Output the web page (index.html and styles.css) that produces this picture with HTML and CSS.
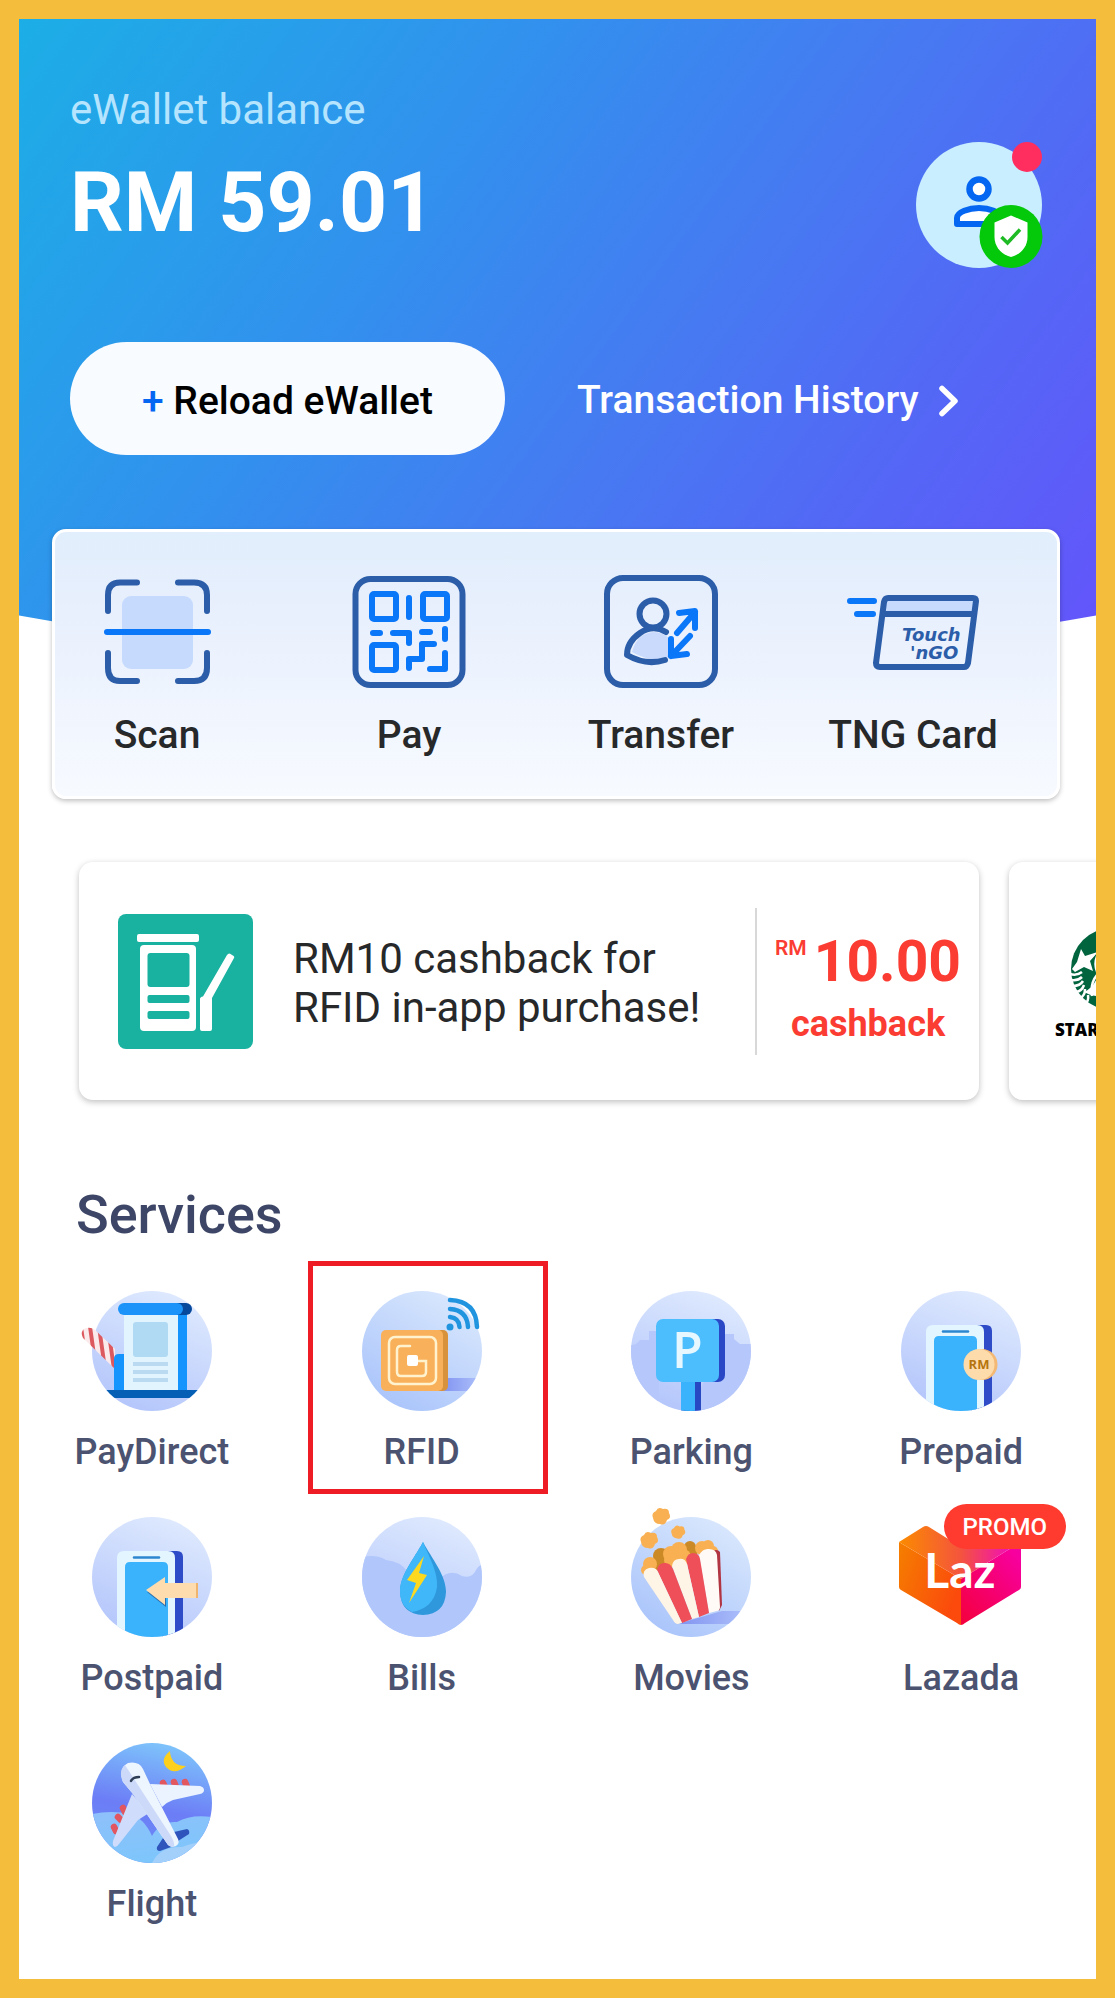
FILE: index.html
```html
<!DOCTYPE html>
<html lang="en">
<head>
    <meta charset="UTF-8">
    <meta name="viewport" content="width=device-width, initial-scale=1.0">
    <title>eWallet</title>
    <link rel="stylesheet" href="styles.css">
</head>
<body>
    <!-- shared gradients and shapes -->
    <svg class="defs" width="0" height="0" aria-hidden="true">
        <defs>
            <linearGradient id="disc" x1="0.7" y1="0" x2="0.3" y2="1">
                <stop offset="0" stop-color="#dfeafe"/>
                <stop offset="1" stop-color="#b3c5fb"/>
            </linearGradient>
            <linearGradient id="discBlue" x1="0.8" y1="0" x2="0.2" y2="1">
                <stop offset="0" stop-color="#dbe9fd"/>
                <stop offset="1" stop-color="#a8c3fb"/>
            </linearGradient>
            <linearGradient id="shade">
                <stop offset="0" stop-color="#8093f0"/>
                <stop offset="1" stop-color="#b0c3fb"/>
            </linearGradient>
            <linearGradient id="sky" x1="0.6" y1="0" x2="0.4" y2="1">
                <stop offset="0" stop-color="#7ec4fb"/>
                <stop offset="0.55" stop-color="#6c7df6"/>
                <stop offset="1" stop-color="#6a8df5"/>
            </linearGradient>
            <linearGradient id="cloud" x1="0" y1="0" x2="0.3" y2="1">
                <stop offset="0" stop-color="#8fc0fb"/>
                <stop offset="1" stop-color="#7cc6fb"/>
            </linearGradient>
            <linearGradient id="lazLeft" x1="0" y1="0" x2="1" y2="0.5">
                <stop offset="0" stop-color="#f57f00"/>
                <stop offset="1" stop-color="#fb4a0c"/>
            </linearGradient>
            <linearGradient id="lazRight" x1="0" y1="1" x2="0.8" y2="0">
                <stop offset="0" stop-color="#f4003c"/>
                <stop offset="1" stop-color="#f700a2"/>
            </linearGradient>
            <linearGradient id="lazTop">
                <stop offset="0" stop-color="#fb8b00"/>
                <stop offset="0.5" stop-color="#f4553c"/>
                <stop offset="1" stop-color="#f000d0"/>
            </linearGradient>
            <clipPath id="round"><circle cx="60" cy="60" r="60"/></clipPath>
            <pattern id="stripes" width="9" height="20" patternUnits="userSpaceOnUse" patternTransform="skewX(8)">
                <rect width="9" height="20" fill="#fbeaec"/>
                <rect width="4" height="20" fill="#dc5a5f"/>
            </pattern>
            <symbol id="phone" viewBox="0 0 120 120">
                <circle cx="60" cy="60" r="60" fill="url(#disc)"/>
                <g clip-path="url(#round)">
                    <path d="M70 34h15q6 0 6 6v80H70z" fill="#2e4bc8"/>
                    <path d="M25 130V41q0-7 7-7h44q7 0 7 7v89z" fill="#e3f5ff"/>
                    <path d="M33 130V50q0-5 5-5h33q5 0 5 5v80z" fill="#3ab2fc"/>
                    <path d="M42 40.500h25" stroke="#2c86cf" stroke-width="2.500" stroke-linecap="round"/>
                </g>
            </symbol>
            <path id="pop" d="M-8 2q-2-5 3-7 2-5 7-2 6-1 6 4 3 5-2 7-2 6-7 4-6 0-7-6z" fill="#f9b052"/>
        </defs>
    </svg>

    <main class="screen">
        <header class="hero">
            <div class="hero-top">
                <div class="balance">
                    <p class="balance-label">eWallet balance</p>
                    <h1 class="balance-amount">RM 59.01</h1>
                </div>
                <a class="avatar" href="#profile" aria-label="Profile">
                    <svg width="127" height="127" viewBox="0 0 127 127">
                        <circle cx="63" cy="63" r="63" fill="#c8eeff"/>
                        <circle cx="63" cy="47" r="9.500" fill="#fff" stroke="#0566f2" stroke-width="6.500"/>
                        <path d="M41 82v-6c0-6 12-10 22-10s22 4 22 10v6z" fill="#fff" stroke="#0566f2" stroke-width="6" stroke-linejoin="round"/>
                        <circle cx="95" cy="94.500" r="31.500" fill="#04c80a"/>
                        <path d="M95 73.500l16.500 7V95c0 10-7 17.500-16.500 20C85.500 112.500 78.500 105 78.500 95V80.500z" fill="#fff"/>
                        <path d="M85.500 95l6 6L104 87.500" fill="none" stroke="#1fbb24" stroke-width="3.500"/>
                        <circle cx="111" cy="15" r="15" fill="#ff2e5f"/>
                    </svg>
                </a>
            </div>
            <div class="hero-actions">
                <button class="reload" type="button"><span class="plus">+</span> Reload eWallet</button>
                <a class="history" href="#history">Transaction History
                    <svg width="20" height="32" viewBox="0 0 20 32"><path d="M3 3.500L16 16 3 28.500" fill="none" stroke="#fff" stroke-width="5.500" stroke-linecap="round" stroke-linejoin="round"/></svg>
                </a>
            </div>
        </header>

        <nav class="quick">
            <a class="quick-item" href="#scan">
                <svg width="114" height="114" viewBox="0 0 114 114" fill="none" stroke-width="6" stroke-linecap="round">
                    <rect x="22" y="21" width="71" height="73" rx="9" fill="#c6dafd"/>
                    <path d="M8 36V20Q8 7.500 20 7.500h17M78 7.500h16q13 0 13 12.500v16M107 78v15q0 13-13 13H78M37 106H20Q8 106 8 93V78" stroke="#2c5da9"/>
                    <path d="M7 57h101" stroke="#0a76f8"/>
                </svg>
                Scan
            </a>
            <a class="quick-item" href="#pay">
                <svg width="114" height="114" viewBox="0 0 114 114" fill="none" stroke="#0a76f8" stroke-width="6" stroke-linecap="round" stroke-linejoin="round">
                    <rect x="3.500" y="4" width="107" height="106" rx="15" stroke="#2c5da9"/>
                    <rect x="20" y="19" width="24" height="25" rx="2"/>
                    <rect x="71" y="19" width="24" height="25" rx="2"/>
                    <rect x="20" y="70" width="24" height="25" rx="2"/>
                    <path d="M57 23v19M21 58h7M41 58h16v10M70 57h8M93 54v10M82 69H70v15H57v9M93 78v16H78"/>
                </svg>
                Pay
            </a>
            <a class="quick-item" href="#transfer">
                <svg width="114" height="114" viewBox="0 0 114 114" fill="none" stroke-width="6" stroke-linecap="round" stroke-linejoin="round">
                    <rect x="3" y="3" width="108" height="107" rx="16" stroke="#2c5da9"/>
                    <path d="M28 77q5-19 22-20 8 0 15 6v20q-18 5-37-6z" fill="#c9dafc"/>
                    <circle cx="49" cy="39" r="13.500" stroke="#2c5da9"/>
                    <path d="M62 57Q49 49 36 58 23 67 23 80q19 11 38 5" stroke="#2c5da9"/>
                    <path d="M73 58L91 37M75 38l16-2v17M86 61L67 81M67 64v17l16-2" stroke="#0a76f8"/>
                </svg>
                Transfer
            </a>
            <a class="quick-item" href="#card">
                <svg width="132" height="114" viewBox="0 0 132 114" fill="none" stroke-width="6" stroke-linecap="round" stroke-linejoin="round">
                    <path d="M38 24h90l-2 15H36z" fill="#c5dafd"/>
                    <path d="M41 23h85q3 0 3 3l-8 62q-1 4-4 4H33q-4 0-4-4l8-61q1-4 4-4zM36 39h90" stroke="#2c5da9"/>
                    <path d="M3 26h24M10 39h16" stroke="#0a76f8"/>
                    <text class="tng-logo" x="55" y="66">Touch</text>
                    <text class="tng-logo" x="63" y="84">'nGO</text>
                </svg>
                TNG Card
            </a>
        </nav>

        <section class="promos">
            <article class="promo">
                <svg width="135" height="135" viewBox="0 0 135 135">
                    <rect width="135" height="135" rx="8" fill="#19b19f"/>
                    <rect x="19" y="20" width="62" height="8" rx="2" fill="#fff"/>
                    <rect x="22" y="31" width="56" height="86" rx="4" fill="#fff"/>
                    <g fill="#19b19f">
                        <rect x="29.500" y="39" width="42" height="34" rx="3"/>
                        <rect x="29.500" y="81" width="42" height="8" rx="2"/>
                        <rect x="29.500" y="97" width="42" height="8" rx="2"/>
                    </g>
                    <path d="M82 85q0-2 3-2.500L109 41q2-3 5 0 3 1 2 3L94 84v31q0 2-2 2h-8q-2 0-2-2z" fill="#fff"/>
                </svg>
                <p class="promo-text">RM10 cashback for<br>RFID in-app purchase!</p>
                <div class="promo-price">
                    <div class="amount"><span class="currency">RM</span>10.00</div>
                    <div class="cashback">cashback</div>
                </div>
            </article>
            <article class="promo">
                <svg width="135" height="135" viewBox="0 0 135 135">
                    <circle cx="64" cy="55" r="41" fill="#00643f"/>
                    <path d="M33 35l4 7 13-4-8 9 3 10-9-4-9 5-3-3 5-7z" fill="#fff"/>
                    <g fill="none" stroke="#fff" stroke-width="2.500">
                        <path d="M22 60q7 2 12-2M23 66q7 1 11-3M25 72q7 0 10-5M28 78q6-1 8-7M32 84q5-2 5-9M37 90q4-3 3-9"/>
                        <path d="M50 40q-5 10 0 20-8 8-6 22"/>
                    </g>
                    <path d="M36 78q9-4 13-14v18q-6 0-13-4z" fill="#fff"/>
                    <text class="starbucks" x="7" y="122">STARBUCKS</text>
                </svg>
            </article>
        </section>

        <section class="services">
            <h2 class="services-title">Services</h2>
            <div class="services-grid">
                <a class="service" href="#paydirect">
                    <svg width="120" height="120" viewBox="0 0 120 120">
                        <circle cx="60" cy="60" r="60" fill="url(#disc)"/>
                        <path d="M-8 38q6-3 11 1l20 19v20L-9 47q-3-6 1-9z" fill="url(#stripes)"/>
                        <rect x="32" y="22" width="54" height="78" fill="#e2f5ff"/>
                        <rect x="86" y="22" width="9" height="78" fill="#1494fc"/>
                        <path d="M22 100V68q0-5 5-5h5v37z" fill="#1494fc"/>
                        <rect x="60" y="12" width="40" height="12" rx="6" fill="#06489b"/>
                        <rect x="26" y="12" width="65" height="12" rx="6" fill="#1b93f8"/>
                        <rect x="41" y="31" width="35" height="35" rx="3" fill="#b0daf4"/>
                        <path d="M41 73h35M41 81h35M41 89h35" stroke="#b9daf0" stroke-width="4"/>
                        <rect y="99" width="120" height="8" fill="#0560b5" clip-path="url(#round)"/>
                    </svg>
                    PayDirect
                </a>
                <a class="service highlighted" href="#rfid">
                    <svg width="120" height="120" viewBox="0 0 120 120" fill="none" stroke-linecap="round">
                        <circle cx="60" cy="60" r="60" fill="url(#discBlue)"/>
                        <rect x="80" y="87" width="40" height="13" fill="url(#shade)" clip-path="url(#round)"/>
                        <rect x="50" y="39" width="36" height="61" rx="5" fill="#d9923c"/>
                        <rect x="19" y="39" width="62" height="61" rx="5" fill="#f8b05a"/>
                        <g stroke="#fff3cf" stroke-width="2.500">
                            <rect x="27" y="46" width="47" height="47" rx="6"/>
                            <path d="M48 55h-9q-4 0-4 4v22q0 4 4 4h21q4 0 4-4V70H54"/>
                        </g>
                        <rect x="45" y="64" width="11" height="11" rx="2" fill="#fff"/>
                        <circle cx="88" cy="36" r="3.500" fill="#2194e0"/>
                        <path d="M88 26q9 1 9.500 10M88 18q17 1 18 18M88 9q26 1 27 27" stroke="#2194e0" stroke-width="4.500"/>
                    </svg>
                    RFID
                </a>
                <a class="service" href="#parking">
                    <svg width="120" height="120" viewBox="0 0 120 120">
                        <circle cx="60" cy="60" r="60" fill="url(#disc)"/>
                        <g clip-path="url(#round)">
                            <path d="M0 54q6 0 9-5h9v-9h10v70H0zM94 43h9v5l6 5h11v67H60z" fill="#b6c7fb"/>
                            <rect x="50" y="85" width="20" height="36" fill="#2748c2"/>
                            <rect x="50" y="85" width="14" height="36" fill="#3ab2fc"/>
                        </g>
                        <rect x="40" y="28" width="54" height="63" rx="7" fill="#2a48c6"/>
                        <rect x="25" y="28" width="63" height="63" rx="7" fill="#4cbefe"/>
                        <text class="parking-letter" x="41" y="77">P</text>
                    </svg>
                    Parking
                </a>
                <a class="service" href="#prepaid">
                    <svg width="120" height="120" viewBox="0 0 120 120">
                        <use href="#phone"/>
                        <circle cx="81" cy="73.500" r="15.500" fill="#f3b873"/>
                        <circle cx="78" cy="73.500" r="15.500" fill="#fddbaa"/>
                        <text class="coin" x="78" y="78">RM</text>
                    </svg>
                    Prepaid
                </a>
                <a class="service" href="#postpaid">
                    <svg width="120" height="120" viewBox="0 0 120 120">
                        <use href="#phone"/>
                        <path d="M55 75l19 15v-8l-1-5z" fill="#2c6fae"/>
                        <path d="M54 73l19-13v6h32v15H73v7z" fill="#ffdcae"/>
                        <path d="M104 66h2v15h-2z" fill="#efb56f"/>
                    </svg>
                    Postpaid
                </a>
                <a class="service" href="#bills">
                    <svg width="120" height="120" viewBox="0 0 120 120">
                        <circle cx="60" cy="60" r="60" fill="url(#disc)"/>
                        <path d="M0 40q15-3 24 3 14 1 22 12 10 6 30 8 12-12 24-4 10 3 14-6 3-5 6-5v72H0z" fill="#b1c7fc" clip-path="url(#round)"/>
                        <path d="M61 25C70 42 84 58 84 75q-1 22-23 23-22-1-23-23c0-17 14-33 23-50z" fill="#2f98dd"/>
                        <path d="M61 25c7 17 15 30 14 45-2 15-12 23-25 25q-12-6-12-21c0-16 14-32 23-49z" fill="#40b7f8"/>
                        <path d="M62 39L45 63l9 3-7 20 18-28-8-2z" fill="#fcd91f"/>
                    </svg>
                    Bills
                </a>
                <a class="service" href="#movies">
                    <svg width="120" height="120" viewBox="0 0 120 120">
                        <circle cx="60" cy="60" r="60" fill="url(#discBlue)"/>
                        <path d="M46 107l45-13h30v13z" fill="url(#shade)" clip-path="url(#round)"/>
                        <use href="#pop" x="30" y="-1"/>
                        <use href="#pop" x="18" y="23"/>
                        <use href="#pop" transform="translate(47 15) scale(0.800)"/>
                        <g fill="#cb8a26">
                            <circle cx="30" cy="39" r="8"/>
                            <circle cx="29" cy="46" r="8"/>
                            <circle cx="59" cy="30" r="6"/>
                            <circle cx="61" cy="34" r="6"/>
                        </g>
                        <g fill="#f9b052">
                            <circle cx="19" cy="47" r="7"/>
                            <circle cx="15" cy="53" r="5"/>
                            <circle cx="40" cy="37" r="8"/>
                            <circle cx="48" cy="33" r="8"/>
                            <circle cx="52" cy="40" r="8"/>
                            <circle cx="40" cy="43" r="7"/>
                            <circle cx="71" cy="31" r="7"/>
                            <circle cx="77" cy="29" r="6"/>
                            <circle cx="82" cy="34" r="5"/>
                        </g>
                        <path d="M80 35q6-4 9 0l2 53-3 6z" fill="#b03441"/>
                        <path d="M68 38q4-7 10-6 7 0 8 6l3 52q0 3-3 4l-8 2z" fill="#fffaf5"/>
                        <path d="M55 42q2-6 7-6 6 0 7 6l9 54-10 4z" fill="#ee4f58"/>
                        <path d="M41 49q1-7 7-7 6-1 8 5l12 53-7 2z" fill="#fff5e6"/>
                        <path d="M26 53q1-7 7-7 6-1 9 6l19 50-10 4z" fill="#ee4f58"/>
                        <path d="M13 60q-2-7 5-9 7-1 9 4l24 51-4 1q-3 0-5-4z" fill="#fff5e6"/>
                    </svg>
                    Movies
                </a>
                <a class="service" href="#lazada">
                    <svg width="120" height="120" viewBox="0 0 120 120">
                        <path d="M-2 25L60 62v46q-2 0-4-2L0 73q-2-1-2-3z" fill="url(#lazLeft)"/>
                        <path d="M120 25L60 62v46q2 0 4-2l54-33q2-1 2-3z" fill="url(#lazRight)"/>
                        <path d="M-2 25L22 10q3-2 6 0l32 20L92 10q3-2 6 0l22 15-60 37z" fill="url(#lazTop)"/>
                        <text class="laz" x="59" y="71">Laz</text>
                    </svg>
                    Lazada
                    <span class="badge">PROMO</span>
                </a>
                <a class="service" href="#flight">
                    <svg width="120" height="120" viewBox="0 0 120 120">
                        <circle cx="60" cy="60" r="60" fill="url(#sky)"/>
                        <g clip-path="url(#round)">
                            <path d="M0 71q20-4 38 0 14 4 22 22 8-15 25-14 14-8 35-5v50H0z" fill="url(#cloud)"/>
                            <path d="M60 120q8-17 30-16 12-5 30-6v22z" fill="#a3cffb"/>
                        </g>
                        <path d="M78 8q-10 8-4 16 8 9 20-1-8 0-12-4-4-5-4-11z" fill="#fcd01c"/>
                        <g stroke="#e2565f" stroke-width="6.500" stroke-linecap="round">
                            <path d="M71 40l2 4M82 39l2 5M93 39l2 5M31 65l2 4M26 74l3 3M22 84l2 4"/>
                        </g>
                        <path d="M71 95l8 2v7l-11 4q-4 0-3-4zM82 89l13-3q3 1 2 5l-11 7z" fill="#2f55bd"/>
                        <path d="M58 41l50 2q4 1 4 4 0 3-4 4l-27 6q-6 2-11 7z" fill="#eaf3ff"/>
                        <path d="M40 51L21 98q-1 5 2 6 2 0 4-3l19-24 11-7z" fill="#cfdcfb"/>
                        <path d="M31 39q-5-14 5-19 11-2 15 6l7 15 28 55q2 5-2 7-5 2-8-1L41 51z" fill="#edf5ff"/>
                        <path d="M31 39q-5-11 2-17l46 71q4 7 3 11-4 0-6-2L41 51z" fill="#cdd9f9"/>
                        <path d="M39 38q2-4 8-4" fill="none" stroke="#2f3f55" stroke-width="2.500" stroke-linecap="round"/>
                    </svg>
                    Flight
                </a>
            </div>
        </section>
    </main>
</body>
</html>
```
FILE: styles.css
```css
* {
    box-sizing: border-box;
}
body {
    margin: 0;
    font-family: Roboto, "Liberation Sans", sans-serif;
    background-color: #fff;
}
h1, h2, p {
    margin: 0;
}
a {
    color: inherit;
    text-decoration: none;
}
svg {
    flex: none;
    overflow: visible;
}
.defs {
    position: absolute;
}
.screen {
    min-height: 100vh;
    border: 19px solid #f5bd3c;
    overflow: hidden;
}

/* balance header */
.hero {
    padding: 67px 53px 207px 51px;
    color: #fff;
    background: linear-gradient(126deg, #1caee6 0%, #338fee 36%, #4779f2 59%, #5269f5 75%, #6454fb 100%);
    clip-path: ellipse(134% 100% at 50% 0);
}
.hero-top {
    display: flex;
    justify-content: space-between;
    align-items: flex-end;
}
.balance {
    display: flex;
    flex-direction: column;
    gap: 20px;
    padding-bottom: 17px;
}
.balance-label {
    font-size: 42px;
    line-height: 48px;
    color: #b5e4ff;
}
.balance-amount {
    font-size: 84px;
    line-height: 98px;
    font-weight: 700;
}
.avatar {
    display: flex;
}
.hero-actions {
    display: flex;
    align-items: center;
    gap: 72px;
    margin-top: 73px;
}
.reload {
    padding: 36px 72px 30px;
    border: none;
    border-radius: 57px;
    background-color: #f8fbff;
    color: #000;
    font: 500 39px/47px Roboto, "Liberation Sans", sans-serif;
    cursor: pointer;
}
.plus {
    color: #0566f2;
}
.history {
    display: flex;
    align-items: center;
    gap: 20px;
    padding-top: 4px;
    font-size: 39px;
    line-height: 47px;
    font-weight: 500;
}

/* main shortcuts */
.quick {
    position: relative;
    display: flex;
    justify-content: space-between;
    margin: -133px 36px 0 33px;
    padding: 43px 54px 38px 12px;
    border: 3px solid #fff;
    border-radius: 14px;
    background: linear-gradient(#e1eefb, #e7effd 25%, #f7faff);
    box-shadow: 0 2px 5px rgba(0, 0, 0, 0.25);
}
.quick-item {
    display: flex;
    flex-direction: column;
    align-items: center;
    gap: 23px;
    width: 180px;
    font-size: 39px;
    line-height: 46px;
    font-weight: 500;
    color: #272829;
}
.tng-logo {
    font: italic 700 18px/1 "DejaVu Sans", sans-serif;
    fill: #2c5da9;
    stroke: none;
}

/* promo carousel */
.promos {
    display: flex;
    gap: 30px;
    margin-top: 51px;
    padding: 12px 0 12px 60px;
    overflow: hidden;
}
.promo {
    display: flex;
    flex: 0 0 88.5%;
    align-items: center;
    height: 238px;
    padding-left: 39px;
    border-radius: 14px;
    background-color: #fff;
    box-shadow: 0 2px 6px rgba(0, 0, 0, 0.25);
}
.promo-text {
    flex: 1;
    margin-left: 40px;
    padding-top: 4px;
    font-size: 42px;
    line-height: 49px;
    color: #272829;
    white-space: nowrap;
}
.promo-price {
    display: flex;
    flex-direction: column;
    align-items: center;
    gap: 8px;
    width: 224px;
    height: 147px;
    padding-top: 21px;
    border-left: 2px solid #d8d8d8;
    color: #fb3c32;
    font-weight: 700;
}
.amount {
    display: flex;
    gap: 7px;
    font-size: 57px;
    line-height: 66px;
}
.currency {
    margin-top: 7px;
    font-size: 21px;
    line-height: 24px;
    font-weight: 600;
}
.cashback {
    font-size: 36px;
    line-height: 42px;
}
.starbucks {
    font: 800 17px "Open Sans", sans-serif;
    fill: #000;
}

/* services */
.services {
    padding: 72px 0 40px;
}
.services-title {
    padding-left: 57px;
    font-size: 54px;
    line-height: 62px;
    font-weight: 500;
    color: #3d4666;
}
.services-grid {
    display: grid;
    grid-template-columns: repeat(4, 1fr);
    row-gap: 44px;
    margin: 45px 0 0 -2px;
}
.service {
    position: relative;
    display: flex;
    flex-direction: column;
    align-items: center;
    gap: 20px;
    font-size: 36px;
    line-height: 42px;
    font-weight: 500;
    color: #4b5370;
}
.highlighted::after {
    content: "";
    position: absolute;
    top: -30px;
    right: 9px;
    bottom: -21px;
    left: 21px;
    border: 5px solid #ee1c24;
}
.badge {
    position: absolute;
    top: -13px;
    right: 30px;
    padding: 2px 19px 0;
    border-radius: 23px;
    background-color: #ff3b30;
    color: #fff;
    font-size: 24px;
    line-height: 43px;
}
.parking-letter {
    font: 600 50px "Open Sans", sans-serif;
    fill: #e6f7ff;
}
.coin {
    font: 700 13px "Open Sans", sans-serif;
    fill: #b5740d;
    text-anchor: middle;
}
.laz {
    font: 700 48px Lato, sans-serif;
    fill: #fff;
    text-anchor: middle;
}
```
